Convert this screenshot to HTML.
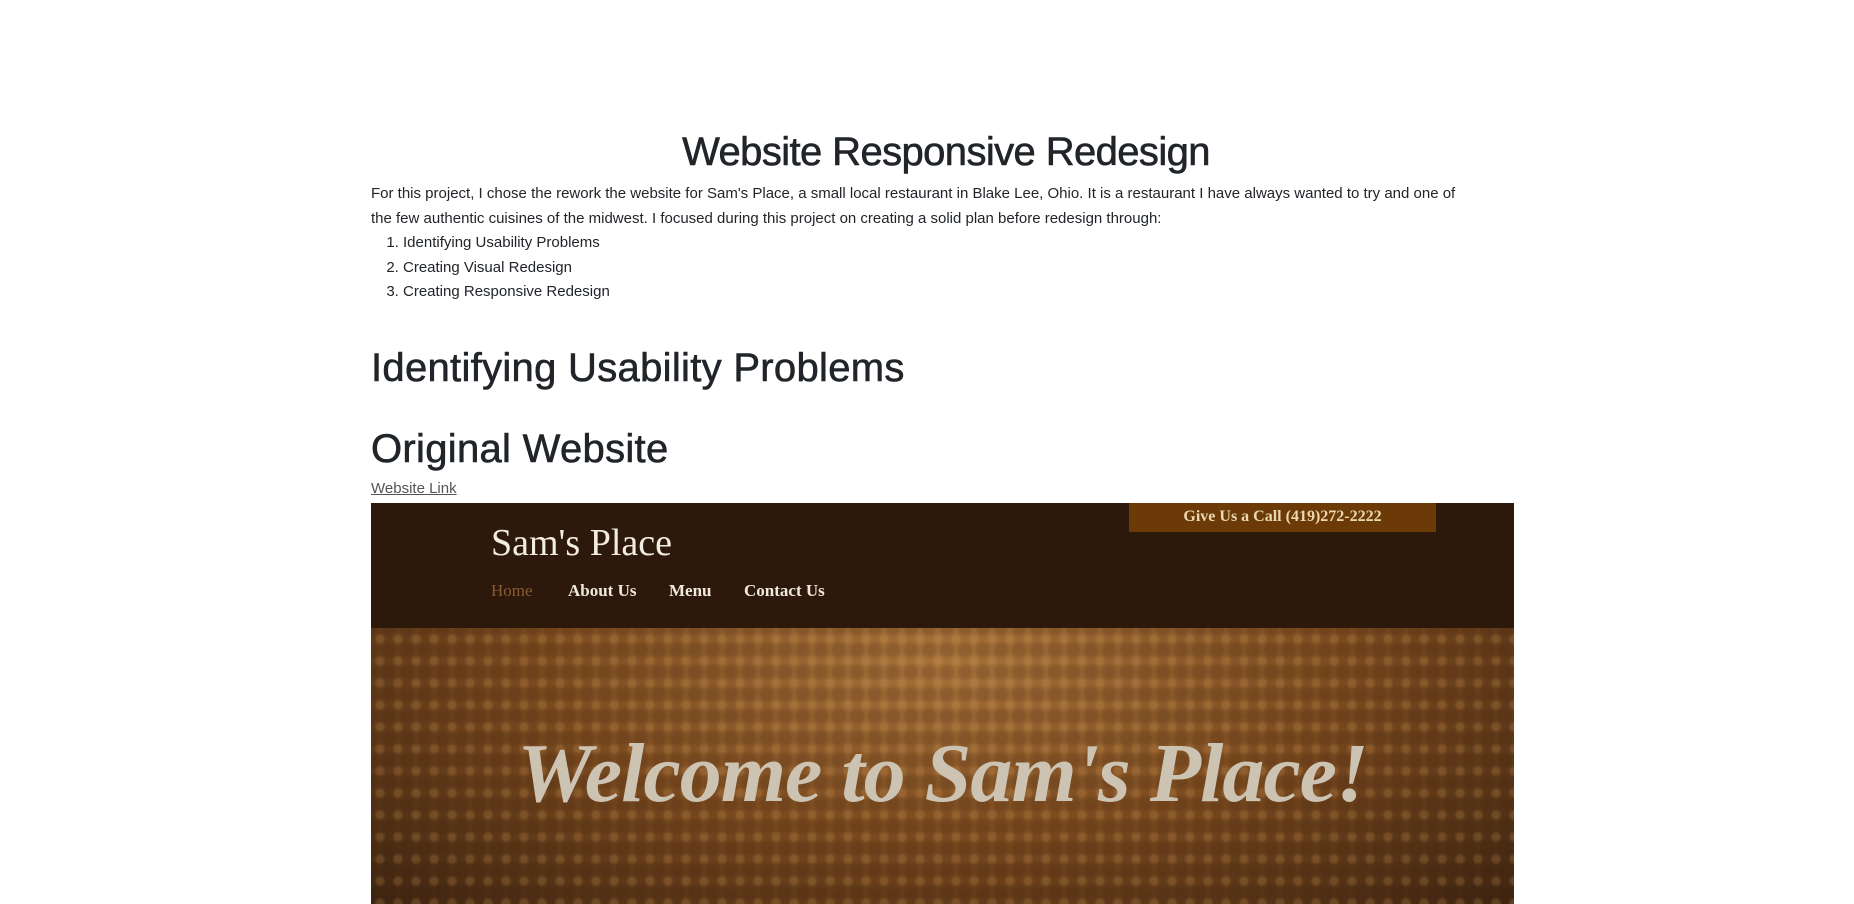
<!DOCTYPE html>
<html><head><meta charset="utf-8"><style>
body{margin:0;background:#fff;font-family:"Liberation Sans",sans-serif;color:#212529;width:1854px;height:904px;overflow:hidden;position:relative}
.c{position:absolute;left:371px;width:1150px}
h1{position:absolute;left:371px;width:1150px;text-align:center;top:128px;margin:0;font-size:40px;font-weight:normal;line-height:48px;letter-spacing:-0.6px;-webkit-text-stroke:0.6px #212529}
p{position:absolute;top:182px;margin:0;font-size:15px;line-height:24.5px;width:1140px}
ol{position:absolute;top:231px;margin:0;padding-left:32px;font-size:15px;line-height:24.5px}
.h2{position:absolute;margin:0;font-size:40px;font-weight:normal;line-height:48px;letter-spacing:0.3px;-webkit-text-stroke:0.6px #212529}
a{color:#555;font-size:15px;position:absolute;top:480px}
.img{position:absolute;left:371px;top:503px;width:1143px;height:401px;overflow:hidden;
background:radial-gradient(ellipse at 50% 40%,#a5713a 0%,#7a4a1f 50%,#3d2410 100%)}
.img:before{content:"";position:absolute;left:0;right:0;top:125px;bottom:0;
background-image:radial-gradient(circle at 50% 50%,rgba(230,170,100,.2) 3px,transparent 6px),radial-gradient(circle at 50% 50%,rgba(60,30,10,.18) 5px,transparent 9px);
background-size:18px 22px,18px 22px;background-position:0 0,9px 11px}
.hd{position:absolute;left:0;top:0;width:1143px;height:125px;background:#2c190b}
.ph{position:absolute;left:758px;top:-2px;width:307px;height:31px;background:#6b3a07;color:#ead8b0;font:bold 16px "Liberation Serif",serif;text-align:center;line-height:31px}
.sp{position:absolute;left:120px;top:18px;color:#f3ece0;font:38px "Liberation Serif",serif}
.nav{position:absolute;top:78px;font:bold 17px "Liberation Serif",serif;color:#f0e8dc}
.wel{position:absolute;left:0;width:1143px;text-align:center;top:222px;font:italic bold 84px "Liberation Serif",serif;color:#cdc3b3;letter-spacing:-1px}
</style></head><body>
<h1>Website Responsive Redesign</h1>
<div class="c">
<p>For this project, I chose the rework the website for Sam's Place, a small local restaurant in Blake Lee, Ohio. It is a restaurant I have always wanted to try and one of<br>the few authentic cuisines of the midwest. I focused during this project on creating a solid plan before redesign through:</p>
<ol><li>Identifying Usability Problems</li><li>Creating Visual Redesign</li><li>Creating Responsive Redesign</li></ol>
<div class="h2" style="top:344px">Identifying Usability Problems</div>
<div class="h2" style="top:425px">Original Website</div>
<a href="#">Website Link</a>
</div>
<div class="img">
<div class="hd">
<div class="ph">Give Us a Call (419)272-2222</div>
<div class="sp">Sam's Place</div>
<div class="nav" style="left:120px;color:#8a5a33;font-weight:normal">Home</div>
<div class="nav" style="left:197px">About Us</div>
<div class="nav" style="left:298px">Menu</div>
<div class="nav" style="left:373px">Contact Us</div>
</div>
<div class="wel">Welcome to Sam's Place!</div>
</div>
</body></html>
